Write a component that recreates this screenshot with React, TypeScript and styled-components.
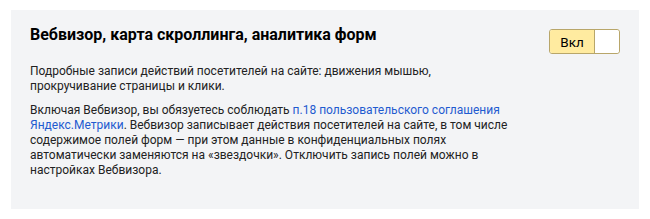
import React, { useState } from 'react'
import styled, { createGlobalStyle } from 'styled-components'

const GlobalStyle = createGlobalStyle`
    html, body {
        margin:0;
        padding:0;
        background:#fff;
    }
    body {
        font-family:Roboto, "Noto Sans", sans-serif;
        color:#000;
    }
`

const Page = styled.div`
    padding:10px 11px;
`

const Panel = styled.div`
    background:#f3f4f6;
    height:199px;
    box-sizing:border-box;
    padding:14px 19px 0 19px;
`

const Header = styled.div`
    display:flex;
    align-items:flex-start;
    justify-content:space-between;
`

const Title = styled.div`
    font-size:16px;
    font-weight:700;
    line-height:22px;
    color:#000;
`

const Text = styled.p<{ top?: number }>`
    margin:${p => p.top ?? 0}px 0 0 0;
    font-size:12px;
    line-height:15px;
    color:#222;
`

const Link = styled.a`
    color:#1f5bd0;
    text-decoration:none;
`

const Toggle = styled.button`
    display:flex;
    align-items:stretch;
    width:71px;
    height:25px;
    margin-top:5px;
    padding:0;
    border:1px solid #b8a66a;
    border-radius:3px;
    overflow:hidden;
    background:#fff;
    cursor:pointer;
`

const ToggleLabel = styled.div<{ on: boolean }>`
    width:44px;
    display:flex;
    align-items:center;
    justify-content:center;
    background:${p => p.on ? '#ffeba0' : '#f0f0f0'};
    font-family:Roboto, sans-serif;
    font-size:13.5px;
    color:#000;
`

const Knob = styled.div`
    flex:1;
    background:#fff;
    border-left:1px solid #b8a66a;
    border-radius:0 2px 2px 0;
`

const App: React.FC = () => {
    const [on, setOn] = useState(true)
    return <Page>
        <GlobalStyle />
        <Panel>
            <Header>
                <div>
                    <Title>Вебвизор, карта скроллинга, аналитика форм</Title>
                    <Text top={18}>
                        Подробные записи действий посетителей на сайте: движения мышью,<br />
                        прокручивание страницы и клики.
                    </Text>
                </div>
                <Toggle onClick={() => setOn(!on)}>
                    <ToggleLabel on={on}>{on ? 'Вкл' : 'Выкл'}</ToggleLabel>
                    <Knob />
                </Toggle>
            </Header>
            <Text top={9}>
                Включая Вебвизор, вы обязуетесь соблюдать <Link href="#">п.18 пользовательского соглашения<br />
                Яндекс.Метрики</Link>. Вебвизор записывает действия посетителей на сайте, в том числе<br />
                содержимое полей форм — при этом данные в конфиденциальных полях<br />
                автоматически заменяются на «звездочки». Отключить запись полей можно в<br />
                настройках Вебвизора.
            </Text>
        </Panel>
    </Page>
}

export default App
